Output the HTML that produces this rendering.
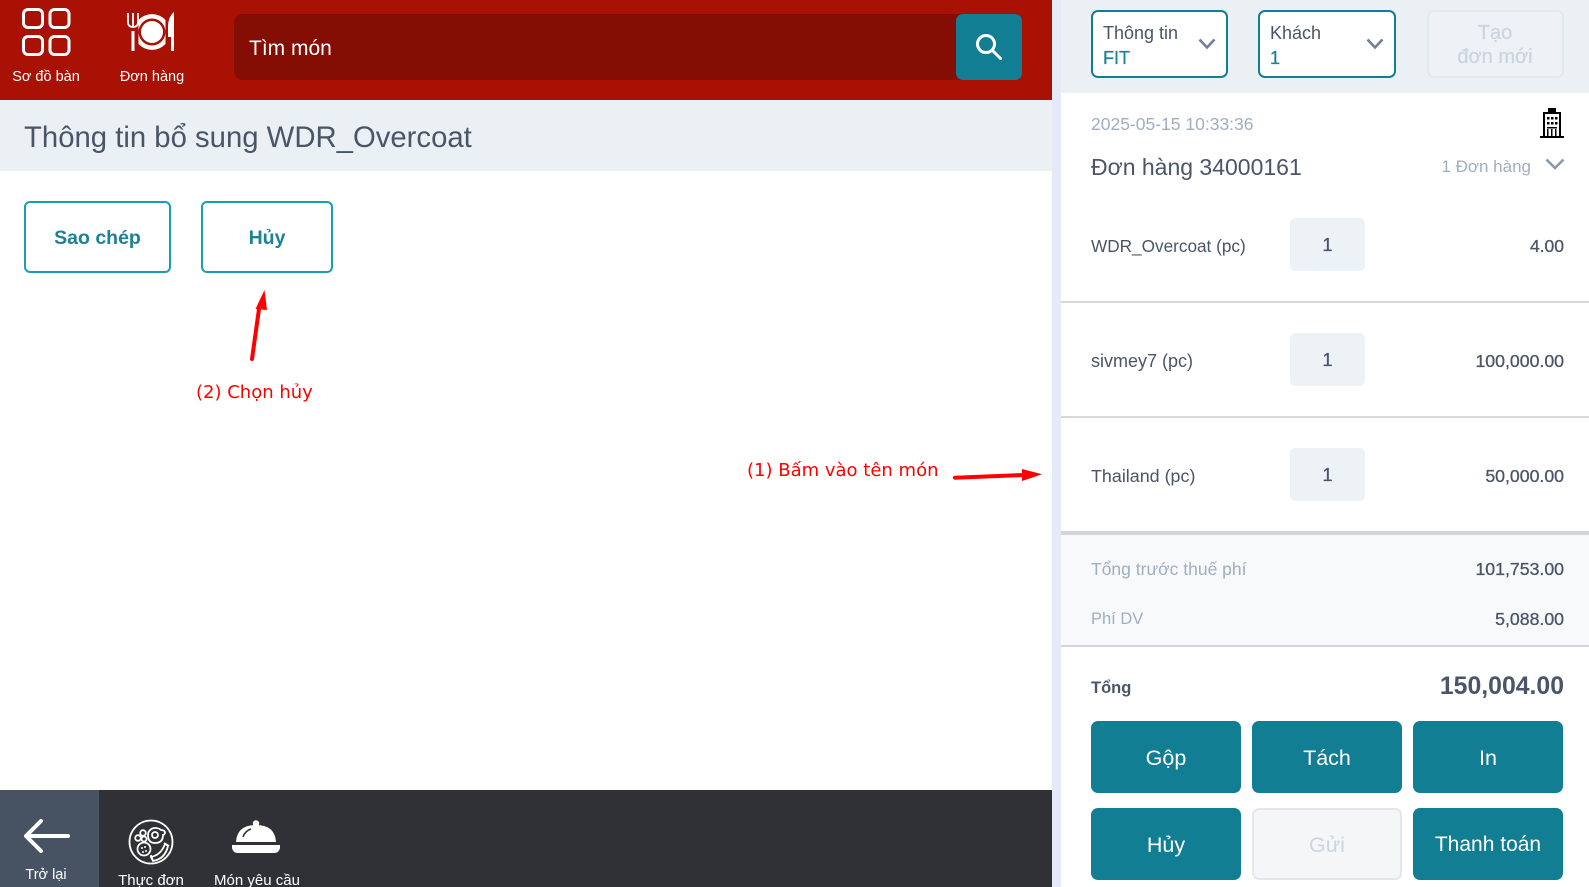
<!DOCTYPE html>
<html lang="vi"><head><meta charset="utf-8"><title>POS</title>
<style>
html,body{margin:0;padding:0;width:1589px;height:887px;overflow:hidden;background:#fff}
body{position:relative;font-family:"Liberation Sans","Noto Sans CJK SC",sans-serif;color:#4a5568}
.a{position:absolute;box-sizing:border-box}
.t{position:absolute;white-space:nowrap;line-height:30px;height:30px}
.c{text-align:center;transform:translateX(-50%)}
.r{transform:translateX(-100%)}
.m{-webkit-text-stroke:.3px currentColor}
.btn{position:absolute;box-sizing:border-box;display:flex;align-items:center;justify-content:center;border-radius:7px;background:#127e93;color:#fff;font-size:21.5px;padding-top:2px}
.out{background:#fff;border:2px solid #1a9eb8;color:#1b8297;font-weight:bold;font-size:19.5px;border-radius:6px;padding-top:3px}
.dd{position:absolute;box-sizing:border-box;background:#fff;border:2px solid #127e93;border-radius:7px}
.box{position:absolute;left:1290px;width:75px;height:53px;background:#edf2f7;border-radius:5px;display:flex;align-items:center;justify-content:center;font-size:18px;padding-top:2px;box-sizing:border-box;-webkit-text-stroke:.3px currentColor}
.red{color:#f00;font-family:"DejaVu Sans",sans-serif;font-size:18px}
svg{position:absolute;overflow:visible}
</style></head><body>
<div class="a" style="left:0;top:0;width:1052px;height:100px;background:#a81104"></div>
<div class="a" style="left:0;top:100px;width:1052px;height:71px;background:#ebf0f4"></div>
<div class="a" style="left:1052px;top:0;width:9px;height:887px;background:#e6eaf7"></div>
<div class="a" style="left:1061px;top:0;width:528px;height:93px;background:#ebf0f4"></div>
<div class="a" style="left:0;top:790px;width:1052px;height:97px;background:#303136"></div>
<div class="a" style="left:0;top:790px;width:99px;height:97px;background:#475362"></div>

<svg style="left:0;top:0" width="100" height="60" fill="none" stroke="#fff" stroke-width="3">
<rect x="23.500" y="9.500" width="19" height="18" rx="4.500"/><rect x="50" y="9.500" width="19" height="18" rx="4.500"/>
<rect x="23.500" y="36.500" width="19" height="18" rx="4.500"/><rect x="50" y="36.500" width="19" height="18" rx="4.500"/></svg>
<div class="t c" style="left:46px;top:62px;color:#fff;font-size:14.500px">Sơ đồ bàn</div>

<svg style="left:120px;top:5px" width="60" height="55">
<path d="M8 8v9q0 5 5 5t5-5V8" fill="none" stroke="#fff" stroke-width="1.800"/>
<path d="M13 8v14" stroke="#fff" stroke-width="1.800"/>
<rect x="11.500" y="26" width="3" height="20" fill="#fff"/>
<path d="M18.500 15A18.500 18.500 0 0 1 45.500 15V39A18.500 18.500 0 0 1 18.500 39Z" fill="#fff"/>
<circle cx="32" cy="27" r="13.500" fill="#a81104"/><circle cx="32" cy="27" r="11" fill="#fff"/>
<path d="M54 7Q48 12 48 22V32H51V46H54Z" fill="#fff"/>
</svg>
<div class="t c" style="left:152px;top:62px;color:#fff;font-size:14.500px">Đơn hàng</div>

<div class="a" style="left:234px;top:14px;width:780px;height:66px;background:#840d04;border-radius:9px"></div>
<div class="t" style="left:249px;top:34px;color:#fff;font-size:21px">Tìm món</div>
<div class="a" style="left:956px;top:14px;width:66px;height:66px;background:#127e93;border-radius:7px"></div>
<svg style="left:975px;top:33px" width="28" height="28" fill="none" stroke="#fff" stroke-width="3"><circle cx="11" cy="11" r="8.500"/><path d="M17 17l8.500 8.500" stroke-linecap="round"/></svg>

<div class="t" style="left:24px;top:123px;font-size:29.300px;line-height:30px">Thông tin bổ sung WDR_Overcoat</div>
<div class="btn out" style="left:24px;top:201px;width:147px;height:72px">Sao chép</div>
<div class="btn out" style="left:201px;top:201px;width:132px;height:72px">Hủy</div>

<svg style="left:0;top:0" width="1100" height="500">
<path d="M252 359L259 309" stroke="#f00" stroke-width="4" stroke-linecap="round"/><path d="M264.500 290L255.500 309 267 310Z" fill="#f00"/>
<path d="M955 477.700L1024 475" stroke="#f00" stroke-width="4" stroke-linecap="round"/><path d="M1042 474.300L1022 469V481Z" fill="#f00"/>
</svg>
<div class="t red" style="left:196px;top:378px">(2) Chọn hủy</div>
<div class="t red" style="left:747px;top:456px">(1) Bấm vào tên món</div>

<svg style="left:24px;top:818px" width="48" height="36" fill="none" stroke="#fff" stroke-width="4" stroke-linecap="round" stroke-linejoin="round"><path d="M44 18H3M17 3L2 18l15 15"/></svg>
<div class="t c" style="left:46px;top:860px;color:#fff;font-size:14.500px">Trở lại</div>
<svg style="left:128px;top:819px" width="46" height="46" fill="none" stroke="#fff" stroke-width="1.800">
<circle cx="23" cy="23" r="21.500"/>
<path d="M20 16a7 7 0 0 1 7-7q4 0 6 2 4 0 4 3-1 2-2 2 0 8-8 8-7 0-7-8z"/><circle cx="27" cy="16" r="3"/>
<circle cx="16" cy="30" r="6.500"/><circle cx="14" cy="29" r="1" fill="#fff" stroke="none"/><circle cx="17" cy="28" r="1" fill="#fff" stroke="none"/><circle cx="18" cy="32" r="1" fill="#fff" stroke="none"/><circle cx="15" cy="33" r="1" fill="#fff" stroke="none"/>
<circle cx="15" cy="14" r="2.800"/><circle cx="10" cy="19" r="2.800"/><circle cx="16" cy="20" r="2.500"/>
<path d="M23 38q10-2 14-13l3 2q-3 13-15 15zM23 36l2 6M36 24l5 3"/></svg>
<div class="t c" style="left:151px;top:866px;color:#fff;font-size:15px">Thực đơn</div>
<svg style="left:232px;top:820px" width="48" height="34" fill="#fff">
<circle cx="24" cy="3.500" r="3.200"/><path d="M4 22Q5 5 24 5T44 22Z"/><path d="M0 25H48V28Q47 33 42 33H6Q1 33 0 28Z"/>
<path d="M11 17Q13 11 19 9" fill="none" stroke="#303136" stroke-width="1.500"/></svg>
<div class="t c" style="left:257px;top:866px;color:#fff;font-size:15px">Món yêu cầu</div>

<div class="dd" style="left:1091px;top:10px;width:137px;height:68px"></div>
<div class="t" style="left:1103px;top:18px;font-size:18px">Thông tin</div>
<div class="t m" style="left:1103px;top:43px;font-size:18px;color:#1b8297">FIT</div>
<svg style="left:1198px;top:38px" width="18" height="12" fill="none" stroke="#718096" stroke-width="2.600"><path d="M1.500 1.500L9 9.500 16.500 1.500"/></svg>
<div class="dd" style="left:1258px;top:10px;width:138px;height:68px"></div>
<div class="t" style="left:1270px;top:18px;font-size:18px">Khách</div>
<div class="t m" style="left:1270px;top:43px;font-size:18px;color:#1b8297">1</div>
<svg style="left:1366px;top:38px" width="18" height="12" fill="none" stroke="#718096" stroke-width="2.600"><path d="M1.500 1.500L9 9.500 16.500 1.500"/></svg>
<div class="a" style="left:1427px;top:10px;width:137px;height:68px;background:#eef2f6;border:2px solid #e4e9ef;border-radius:7px"></div>
<div class="t c m" style="left:1495px;top:18px;font-size:20px;color:#cbd5e0;text-align:center">Tạo</div>
<div class="t c m" style="left:1495px;top:42px;font-size:20px;color:#cbd5e0;text-align:center">đơn mới</div>

<div class="t" style="left:1091px;top:109px;font-size:17.500px;color:#a0aec0">2025-05-15 10:33:36</div>
<svg style="left:1540px;top:108px" width="24" height="31" fill="#000">
<rect x="8" y="0" width="8" height="4"/><path d="M3 4H21V28H3ZM5 6V28H19V6Z" fill-rule="evenodd"/>
<rect x="7" y="9" width="2.500" height="2.500"/><rect x="11" y="9" width="2.500" height="2.500"/><rect x="15" y="9" width="2.500" height="2.500"/>
<rect x="7" y="14" width="2.500" height="2.500"/><rect x="11" y="14" width="2.500" height="2.500"/><rect x="15" y="14" width="2.500" height="2.500"/>
<rect x="7" y="19" width="10" height="1.500"/><rect x="7" y="21" width="1.500" height="7"/><rect x="11" y="21" width="1.500" height="7"/><rect x="15" y="21" width="1.500" height="7"/>
<rect x="0" y="28" width="24" height="2"/></svg>
<div class="t" style="left:1091px;top:152px;font-size:23px">Đơn hàng 34000161</div>
<div class="t r" style="left:1531px;top:152px;font-size:17px;color:#a0aec0">1 Đơn hàng</div>
<svg style="left:1545px;top:158px" width="20" height="12" fill="none" stroke="#8a99ad" stroke-width="2.600"><path d="M1.500 1.500L10 10 18.500 1.500"/></svg>

<div class="t" style="left:1091px;top:231px;font-size:17.200px">WDR_Overcoat (pc)</div>
<div class="box" style="top:218px">1</div>
<div class="t r m" style="left:1564px;top:231px;font-size:17.500px">4.00</div>
<div class="a" style="left:1061px;top:301px;width:528px;height:2px;background:#d5d8dc"></div>

<div class="t" style="left:1091px;top:346px;font-size:18px">sivmey7 (pc)</div>
<div class="box" style="top:333px">1</div>
<div class="t r m" style="left:1564px;top:346px;font-size:17.700px">100,000.00</div>
<div class="a" style="left:1061px;top:416px;width:528px;height:2px;background:#d5d8dc"></div>

<div class="t" style="left:1091px;top:461px;font-size:17.900px">Thailand (pc)</div>
<div class="box" style="top:448px">1</div>
<div class="t r m" style="left:1564px;top:461px;font-size:17.700px">50,000.00</div>

<div class="a" style="left:1061px;top:531px;width:528px;height:116px;background:#f7f9fb;border-top:4px solid #d3d5d8;border-bottom:2px solid #d3d5d8"></div>
<div class="t" style="left:1091px;top:554px;font-size:17.500px;color:#a0aec0">Tổng trước thuế phí</div>
<div class="t r m" style="left:1564px;top:554px;font-size:17.700px">101,753.00</div>
<div class="t" style="left:1091px;top:604px;font-size:16.500px;color:#a0aec0">Phí DV</div>
<div class="t r m" style="left:1564px;top:604px;font-size:17.700px">5,088.00</div>
<div class="t" style="left:1091px;top:673px;font-size:16.500px;font-weight:bold">Tổng</div>
<div class="t r" style="left:1564px;top:672px;font-size:24.800px;font-weight:bold">150,004.00</div>

<div class="btn" style="left:1091px;top:721px;width:150px;height:72px">Gộp</div>
<div class="btn" style="left:1252px;top:721px;width:150px;height:72px">Tách</div>
<div class="btn" style="left:1413px;top:721px;width:150px;height:72px">In</div>
<div class="btn" style="left:1091px;top:808px;width:150px;height:72px">Hủy</div>
<div class="btn" style="left:1252px;top:808px;width:150px;height:72px;background:#f4f6f8;border:2px solid #e4e8ee;color:#cbd5e0">Gửi</div>
<div class="btn" style="left:1413px;top:808px;width:150px;height:72px;font-size:21px">Thanh toán</div>
</body></html>
